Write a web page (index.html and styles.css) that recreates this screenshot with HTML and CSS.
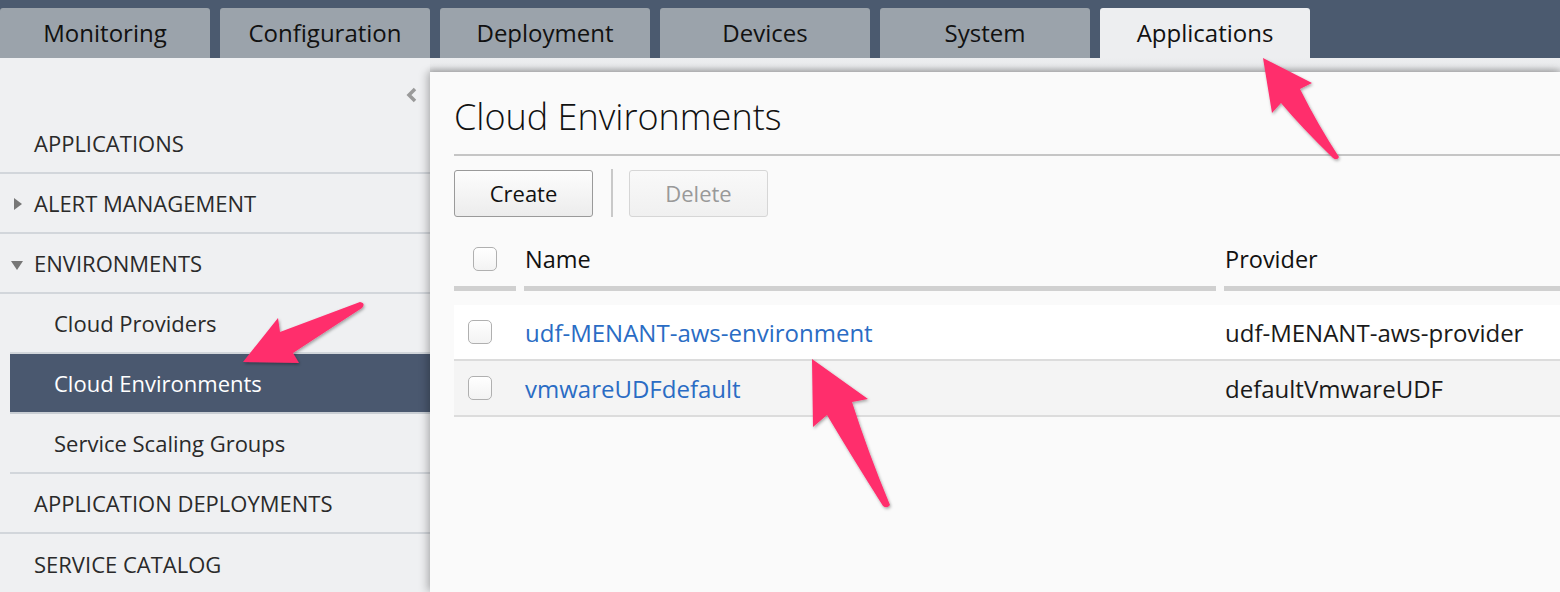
FILE: index.html
```html
<!DOCTYPE html>
<html>
<head>
<meta charset="utf-8">
<link rel="stylesheet" href="styles.css">
</head>
<body>
<div class="page">
  <nav class="topbar">
    <div class="tab">Monitoring</div>
    <div class="tab">Configuration</div>
    <div class="tab">Deployment</div>
    <div class="tab">Devices</div>
    <div class="tab">System</div>
    <div class="tab active">Applications</div>
  </nav>
  <div class="content">
    <aside class="sidebar">
      <div class="side-top">
        <svg class="collapse" width="12" height="16" viewBox="0 0 12 16"><polyline points="10,2 4,8 10,14" fill="none" stroke="#9a9a9a" stroke-width="3.5"/></svg>
      </div>
      <div class="item">APPLICATIONS</div>
      <div class="item"><span class="tri tri-right"></span>ALERT MANAGEMENT</div>
      <div class="item"><span class="tri tri-down"></span>ENVIRONMENTS</div>
      <div class="item sub">Cloud Providers</div>
      <div class="item sub active">Cloud Environments</div>
      <div class="item sub">Service Scaling Groups</div>
      <div class="item">APPLICATION DEPLOYMENTS</div>
      <div class="item last">SERVICE CATALOG</div>
    </aside>
    <main class="main">
      <section class="panel">
        <h1 class="title">Cloud Environments</h1>
        <div class="toolbar">
          <button class="btn">Create</button>
          <span class="sep"></span>
          <button class="btn disabled">Delete</button>
        </div>
        <div class="table">
          <div class="thead">
            <div class="th th-check"><span class="cb"></span></div>
            <div class="th">Name</div>
            <div class="th">Provider</div>
          </div>
          <div class="tr odd">
            <div class="td td-check"><span class="cb"></span></div>
            <div class="td"><a class="link">udf-MENANT-aws-environment</a></div>
            <div class="td">udf-MENANT-aws-provider</div>
          </div>
          <div class="tr even">
            <div class="td td-check"><span class="cb"></span></div>
            <div class="td"><a class="link">vmwareUDFdefault</a></div>
            <div class="td">defaultVmwareUDF</div>
          </div>
        </div>
      </section>
    </main>
  </div>
  <svg class="arrows" width="1560" height="592" viewBox="0 0 1560 592">
    <defs>
      <filter id="sh" x="-20%" y="-20%" width="140%" height="140%">
        <feDropShadow dx="1" dy="1.5" stdDeviation="1.5" flood-color="#000" flood-opacity="0.35"/>
      </filter>
    </defs>
    <g fill="#ff2d6c" filter="url(#sh)">
      <path d="M1263,58 L1312,83 L1300,89 Q1318,125 1339,157 Q1337,161 1333,158 Q1302,128 1281,103 L1272,113 Z"/>
      <path d="M243,362 L278,318 L280,332 Q320,317 360,302 Q366,303 362,308 Q325,332 293,353 L299,363 Z"/>
      <path d="M812,359 L868,399 L852,402 Q868,452 890,505 Q887,509 883,506 Q852,457 827,415 L813,427 Z"/>
    </g>
  </svg>
</div>
</body>
</html>
```

FILE: styles.css
```css
* { box-sizing: border-box; }
html, body { margin: 0; padding: 0; }
body {
  font-family: "Open Sans", "DejaVu Sans", sans-serif;
  color: #222;
  background: #eff0f2;
}
.page {
  position: relative;
  width: 1560px;
  height: 592px;
  overflow: hidden;
}
.topbar {
  height: 58px;
  background: #4b5a6f;
  display: flex;
  align-items: flex-end;
  gap: 10px;
}
.tab {
  width: 210px;
  height: 50px;
  background: #9ba3ab;
  border-radius: 3px 3px 0 0;
  text-align: center;
  line-height: 50px;
  font-size: 24px;
  color: #111;
}
.tab.active { background: #edeef0; }
.content {
  display: flex;
  height: 534px;
}
.sidebar {
  width: 430px;
  flex: none;
  background: #eff0f2;
}
.side-top {
  height: 56px;
  display: flex;
  justify-content: flex-end;
  padding: 29px 13px 0 0;
}
.collapse { display: block; }
.item {
  height: 60px;
  border-bottom: 2px solid #d2d6db;
  display: flex;
  align-items: center;
  padding-left: 34px;
  font-size: 22px;
  color: #2a2a2a;
  position: relative;
}
.item.sub {
  margin-left: 10px;
  padding-left: 44px;
}
.item.active {
  background: #4a586f;
  color: #fff;
  border-bottom-color: #c9ced4;
}
.item.last { border-bottom: none; }
.tri {
  position: absolute;
  width: 0; height: 0;
}
.tri-right {
  left: 14px;
  top: 24px;
  border-top: 6px solid transparent;
  border-bottom: 6px solid transparent;
  border-left: 8px solid #777;
}
.tri-down {
  left: 11px;
  top: 27px;
  border-left: 6px solid transparent;
  border-right: 6px solid transparent;
  border-top: 9px solid #777;
}
.main {
  flex: 1;
  padding-top: 14px;
  background: linear-gradient(#edeef0 0px, #e8e9eb 8px, #d3d4d6 14px);
  position: relative;
}
.panel {
  height: 100%;
  background: #fafafa;
  box-shadow: -4px 0 8px rgba(0,0,0,0.18), 0 -3px 6px rgba(0,0,0,0.12);
  padding-left: 24px;
}
.title {
  margin: 0;
  font-weight: 300;
  font-size: 36px;
  color: #111;
  height: 84px;
  line-height: 1;
  padding-top: 27px;
  border-bottom: 2px solid #c5c5c5;
}
.toolbar {
  display: flex;
  align-items: center;
  height: 48px;
  margin-top: 13px;
  gap: 0;
}
.btn {
  font-family: inherit;
  font-size: 22px;
  height: 47px;
  width: 139px;
  border-radius: 3px;
  border: 1px solid #9a9a9a;
  background: linear-gradient(#fdfdfd, #ececec);
  color: #111;
  padding: 0;
}
.btn.disabled {
  border-color: #d6d6d6;
  background: linear-gradient(#f9f9f9, #f0f0f0);
  color: #999;
}
.sep {
  width: 2px;
  height: 48px;
  background: #c9c9c9;
  margin: 0 16px 0 18px;
}
.table { margin-top: 17px; }
.thead, .tr {
  display: grid;
  grid-template-columns: 62px 692px 1fr;
  column-gap: 8px;
}
.thead { height: 57px; }
.th {
  border-bottom: 5px solid #d0d0d0;
  font-size: 23.5px;
  color: #111;
  display: flex;
  align-items: center;
  padding-left: 1px;
  padding-bottom: 3px;
}
.th-check { padding-left: 19px; }
.tr {
  height: 56px;
  border-bottom: 2px solid #dcdcdc;
  margin-top: 0;
}
.tr.odd { background: #fff; margin-top: 14px; }
.tr.even { background: #f4f4f4; }
.td {
  display: flex;
  align-items: center;
  font-size: 24px;
  color: #1a1a1a;
  padding-left: 1px;
}
.td-check { padding-left: 14px; }
.cb {
  display: inline-block;
  width: 24px;
  height: 24px;
  border: 1px solid #b0b0b0;
  border-radius: 5px;
  background: linear-gradient(#fff, #f3f3f3);
}
.link { color: #2a6cc4; text-decoration: none; }
.arrows {
  position: absolute;
  left: 0;
  top: 0;
  pointer-events: none;
}
```
